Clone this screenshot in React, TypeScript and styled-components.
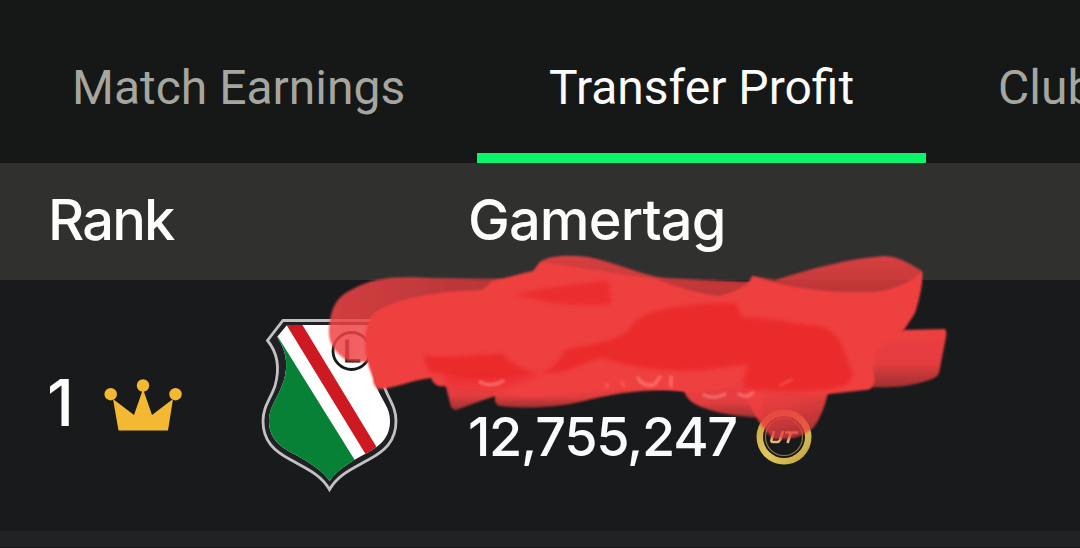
import React from "react";
import styled, { createGlobalStyle } from "styled-components";

const GlobalStyle = createGlobalStyle`
  * {
    box-sizing: border-box;
  }
  body {
    margin: 0;
    background: #191a1c;
    overflow: hidden;
  }
`;

const Page = styled.div`
  position: relative;
  display: flex;
  flex-direction: column;
  width: 1080px;
  height: 548px;
  overflow: hidden;
  background: #191a1c;
  color: #fdfdfc;
  font-family: Inter, "Liberation Sans", sans-serif;
`;

const Tabs = styled.nav`
  display: flex;
  flex: none;
  height: 163px;
  background: #161817;
`;

const Tab = styled.button<{ $width: number; $active?: boolean }>`
  flex: none;
  width: ${({ $width }) => $width}px;
  padding: 22px 0 0 72px;
  border: 0;
  border-bottom: 10px solid ${({ $active }) => ($active ? "#0af56b" : "transparent")};
  background: none;
  color: ${({ $active }) => ($active ? "#fbfcfb" : "#a5a69f")};
  font: 400 48px/1 Roboto, sans-serif;
  text-align: left;
  white-space: nowrap;
`;

const TableHead = styled.div`
  display: grid;
  grid-template-columns: 420px 1fr;
  align-items: center;
  flex: none;
  height: 117px;
  padding: 0 0 4px 48px;
  background: #30302e;
`;

const HeadCell = styled.span<{ $spacing: number }>`
  font-size: 56px;
  font-weight: 500;
  line-height: 68px;
  letter-spacing: ${({ $spacing }) => $spacing}px;
`;

const Row = styled.div`
  display: grid;
  grid-template-columns: 56px 157px 208px 1fr;
  flex: none;
  height: 251px;
  padding-left: 47px;
`;

const Rank = styled.span`
  margin-top: 84px;
  font-size: 65px;
  font-weight: 500;
  line-height: 78px;
`;

const CrownIcon = styled.svg`
  margin-top: 98px;
`;

const CrestIcon = styled.svg`
  margin-top: 36px;
`;

const Earnings = styled.div`
  display: flex;
  align-items: center;
  gap: 18px;
  height: 60px;
  margin-top: 127px;
`;

const Amount = styled.span`
  width: 270px;
  font-size: 54px;
  font-weight: 500;
  line-height: 60px;
  letter-spacing: -1.3px;
  white-space: nowrap;
  color: #fafbff;
`;

const NextRow = styled.div`
  flex: 1;
  background: #212225;
  border-bottom: 1px solid #161719;
`;

const ScribbleLayer = styled.svg`
  position: absolute;
  inset: 0;
  pointer-events: none;
`;

const Crown = () => (
  <CrownIcon width="80" height="54" viewBox="103 378 80 54" fill="#f3b932">
    <path d="M113 399 134 415 143 389 152 415 173 399 168 430.500H118.500Z" />
    <circle cx="110.700" cy="394.200" r="6.200" />
    <circle cx="143" cy="385.500" r="6.200" />
    <circle cx="175.500" cy="394.200" r="6.200" />
  </CrownIcon>
);

const Crest = () => (
  <CrestIcon width="138" height="180" viewBox="260 316 138 180">
    <defs>
      <clipPath id="shield">
        <path d="M287 325H372L380 337C371 353 370 370 377 388C383 402 390 408 390 421C390 437 381 446 365 454C350 462 337 470 329.500 481C322 470 309 462 294 454C278 446 269 437 269 421C269 408 275 402 281 388C289 370 288 353 277 337Z" />
      </clipPath>
    </defs>
    <path
      d="M283 320.500H376L391 341C382 352 379 368 384 386C389 400 396 407 396 421C396 441 385 451 368 460C350 470 338 475 329.500 489.500C321 475 309 470 291 460C274 451 263 441 263 421C263 407 270 400 275 386C280 368 277 352 267.500 340.500Z"
      fill="#202124"
      stroke="#c3c1c4"
      strokeWidth="2.800"
    />
    <g clipPath="url(#shield)">
      <path d="M260 316H398V496H260Z" fill="#fff" />
      <path d="M260 308 356 462 330 496H260Z" fill="#068135" />
      <path d="M281 316H297L382 456 371 463Z" fill="#ce1922" />
    </g>
    <circle cx="351.500" cy="351" r="18.500" fill="#fff" stroke="#17191b" strokeWidth="2.800" />
    <text
      x="343"
      y="362"
      fontFamily="Liberation Sans, sans-serif"
      fontSize="32"
      fill="#17191b"
      stroke="#17191b"
      strokeWidth="1"
    >
      L
    </text>
  </CrestIcon>
);

const Coin = () => (
  <svg width="56" height="56" viewBox="0 0 56 56">
    <defs>
      <linearGradient id="gold" x2="1" y2="1">
        <stop offset="0" stopColor="#c49b3c" />
        <stop offset="0.500" stopColor="#e2c85d" />
        <stop offset="1" stopColor="#bea03c" />
      </linearGradient>
    </defs>
    <circle cx="28" cy="28" r="27.500" fill="url(#gold)" />
    <circle cx="28" cy="28" r="21" fill="#17191b" />
    <circle cx="28" cy="28" r="18.500" fill="none" stroke="#8c7a3d" strokeWidth="1.200" />
    <g fill="none" stroke="#e3bc80" strokeWidth="2.600">
      <path d="M18 22 15.500 31Q15 33 17 33H21Q23 33 24 31L27 22" />
      <path d="M29 23.500H42M35 23.500 31.500 34" />
    </g>
  </svg>
);

const Scribble = () => (
  <ScribbleLayer width="1080" height="548" viewBox="0 0 1080 548">
    <defs>
      <filter id="soft" x="-5%" y="-10%" width="110%" height="120%">
        <feGaussianBlur stdDeviation="1.300" />
      </filter>
      <filter id="softer" x="-10%" y="-20%" width="120%" height="140%">
        <feGaussianBlur stdDeviation="2" />
      </filter>
      <linearGradient id="leftBand" x1="0" y1="0" x2="1" y2="0">
        <stop offset="0" stopColor="#f04446" stopOpacity="0.860" />
        <stop offset="1" stopColor="#e93e40" stopOpacity="0.740" />
      </linearGradient>
      <linearGradient id="band" x1="0" y1="0" x2="0" y2="1">
        <stop offset="0" stopColor="#ea4041" stopOpacity="0.900" />
        <stop offset="1" stopColor="#e03c3d" stopOpacity="0.780" />
      </linearGradient>
      <linearGradient id="tail" x1="0" y1="0" x2="0" y2="1">
        <stop offset="0" stopColor="#ee4041" />
        <stop offset="0.600" stopColor="#e93e3f" stopOpacity="0.970" />
        <stop offset="1" stopColor="#d83a3b" stopOpacity="0.700" />
      </linearGradient>
      <linearGradient id="bulb" x1="0" y1="0" x2="0.300" y2="1">
        <stop offset="0" stopColor="#ef4041" />
        <stop offset="0.500" stopColor="#ec3f40" stopOpacity="0.970" />
        <stop offset="1" stopColor="#e63c3d" stopOpacity="0.750" />
      </linearGradient>
    </defs>
    <g filter="url(#soft)">
      <path
        d="M348 361C333 352 328 341 329 329C331 307 336 297 353 289C373 278 394 276 430 278L500 279 520 305 380 340 366 362Z"
        fill="url(#leftBand)"
      />
      <path d="M540 262C550 255 570 255 588 257C615 262 640 275 665 278L750 282 730 310 550 284Z" fill="url(#band)" />
      <path d="M752 276 775 280C810 269 850 258 885 256C903 257 914 267 922 271L920 282 900 304H770Z" fill="url(#band)" />
      <path d="M860 336 904 330 945 329Q947 331 946 337L939 373Q938 378 923 382C906 387 887 388 860 387Z" fill="url(#tail)" />
      <path d="M443 374 500 378 498 395Q480 401 456 410Q451 410 450 403Z" fill="url(#tail)" />
      <path d="M495 380H690V391C650 388 618 393 588 400C558 408 525 409 500 406Q495 405 495 399Z" fill="url(#tail)" />
      <path d="M681 379H762V418C730 416 705 411 692 402Q684 396 684 388Z" fill="url(#tail)" />
      <path d="M745 375H830C829 396 823 414 814 427C804 437 789 440 773 439C759 425 748 405 745 390Z" fill="url(#bulb)" />
    </g>
    <path
      filter="url(#soft)"
      fill="#ef4041"
      d="M379 389Q373 387 373 378C363 354 361 329 374 313C392 300 423 295 448 292L482 290Q487 287 492 281C508 277 524 273 533 271L540 262C575 267 619 274 655 279C680 288 700 294 718 296C733 293 748 287 752 276Q768 282 785 285C820 292 855 294 882 291C898 288 913 281 922 271Q924 285 915 313L904 330 878 348C874 359 872 371 875 380Q872 391 865 390L820 395C790 394 750 389 744 380C720 390 696 395 680 391C640 386 610 390 573 393C545 398 516 399 497 391L444 386Q435 388 431 378C412 380 393 389 379 389Z"
    />
    <g filter="url(#softer)" fill="#eb292c">
      <path d="M515 295C545 286 588 284 608 280L612 304C590 307 570 304 552 303Z" opacity="0.850" />
      <path d="M423 356C455 358 480 354 503 354C515 367 529 374 549 373C570 374 580 363 602 358C640 370 680 374 720 368L748 364C744 376 744 384 744 389C775 391 810 394 841 387Q852 383 853 373L843 348C839 335 829 327 813 325C794 325 778 317 742 318L736 303C690 303 640 308 630 328C625 340 586 345 565 350C556 366 550 374 520 375C480 382 456 377 429 371Z" />
      <path d="M444 373 540 375C525 382 515 388 493 389L445 386Z" opacity="0.450" />
    </g>
    <g fill="none" stroke="#ff8582" strokeWidth="3.500" opacity="0.600" strokeLinecap="round" filter="url(#soft)">
      <path d="M480 382Q491 388 503 381" />
      <path d="M607 387V384M624 386 622 382" opacity="0.500" />
      <path d="M638 378Q644 388 655 384L660 377M671 386V377" />
      <path d="M704 395Q714 400 725 394M739 394Q745 399 753 393" />
      <path d="M781 385 791 380" opacity="0.500" />
    </g>
  </ScribbleLayer>
);

const tabs = [
  { label: "Match Earnings", width: 477 },
  { label: "Transfer Profit", width: 449, active: true },
  { label: "Club", width: 154 },
];

function App() {
  return (
    <Page>
      <GlobalStyle />
      <Tabs>
        {tabs.map((tab) => (
          <Tab key={tab.label} $width={tab.width} $active={tab.active}>
            {tab.label}
          </Tab>
        ))}
      </Tabs>
      <TableHead>
        <HeadCell $spacing={-1.8}>Rank</HeadCell>
        <HeadCell $spacing={-0.9}>Gamertag</HeadCell>
      </TableHead>
      <Row>
        <Rank>1</Rank>
        <Crown />
        <Crest />
        <Earnings>
          <Amount>12,755,247</Amount>
          <Coin />
        </Earnings>
      </Row>
      <NextRow />
      <Scribble />
    </Page>
  );
}

export default App;
